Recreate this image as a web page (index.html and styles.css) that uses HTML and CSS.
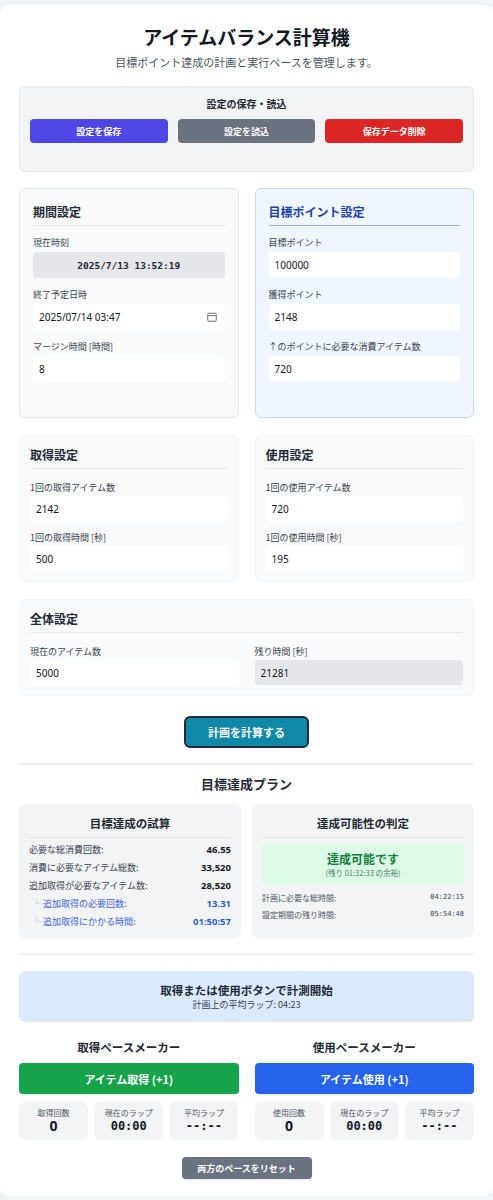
FILE: index.html
```html
<!DOCTYPE html>
<html lang="ja">
<head>
<meta charset="utf-8">
<title>アイテムバランス計算機</title>
<link rel="stylesheet" href="styles.css">
</head>
<body>
<main class="app">
  <header class="header">
    <h1 class="title">アイテムバランス計算機</h1>
    <p class="subtitle">目標ポイント達成の計画と実行ペースを管理します。</p>
  </header>

  <section class="save-box">
    <h3 class="save-title">設定の保存・読込</h3>
    <div class="save-btns">
      <button class="btn btn-indigo">設定を保存</button>
      <button class="btn btn-gray">設定を読込</button>
      <button class="btn btn-red">保存データ削除</button>
    </div>
  </section>

  <div class="grid2 row1">
    <section class="card">
      <h2 class="card-title">期間設定</h2>
      <div class="field">
        <label class="label">現在時刻</label>
        <div class="clock">2025/7/13 13:52:19</div>
      </div>
      <div class="field">
        <label class="label">終了予定日時</label>
        <div class="input date-input"><span>2025/07/14 03:47</span>
          <svg class="cal" width="10" height="10" viewBox="0 0 10 10"><rect x="0.75" y="1.25" width="8.5" height="8" rx="1" fill="none" stroke="#6b7280" stroke-width="1"/><line x1="0.75" y1="3.6" x2="9.25" y2="3.6" stroke="#6b7280" stroke-width="1"/></svg>
        </div>
      </div>
      <div class="field">
        <label class="label">マージン時間 [時間]</label>
        <input class="input" type="text" value="8">
      </div>
    </section>

    <section class="card card-blue">
      <h2 class="card-title">目標ポイント設定</h2>
      <div class="field">
        <label class="label">目標ポイント</label>
        <input class="input" type="text" value="100000">
      </div>
      <div class="field">
        <label class="label">獲得ポイント</label>
        <input class="input" type="text" value="2148">
      </div>
      <div class="field">
        <label class="label">↑のポイントに必要な消費アイテム数</label>
        <input class="input" type="text" value="720">
      </div>
    </section>
  </div>

  <div class="grid2 row2">
    <section class="card compact">
      <h2 class="card-title">取得設定</h2>
      <div class="field">
        <label class="label">1回の取得アイテム数</label>
        <input class="input" type="text" value="2142">
      </div>
      <div class="field">
        <label class="label">1回の取得時間 [秒]</label>
        <input class="input" type="text" value="500">
      </div>
    </section>
    <section class="card compact">
      <h2 class="card-title">使用設定</h2>
      <div class="field">
        <label class="label">1回の使用アイテム数</label>
        <input class="input" type="text" value="720">
      </div>
      <div class="field">
        <label class="label">1回の使用時間 [秒]</label>
        <input class="input" type="text" value="195">
      </div>
    </section>
  </div>

  <section class="card compact row3">
    <h2 class="card-title">全体設定</h2>
    <div class="grid2 inner">
      <div class="field">
        <label class="label">現在のアイテム数</label>
        <input class="input" type="text" value="5000">
      </div>
      <div class="field">
        <label class="label">残り時間 [秒]</label>
        <input class="input readonly" type="text" value="21281" readonly>
      </div>
    </div>
  </section>

  <div class="center">
    <button class="btn-calc">計画を計算する</button>
  </div>

  <hr class="divider first">

  <h2 class="plan-title">目標達成プラン</h2>
  <div class="plan-grid">
    <section class="plan-card">
      <h3 class="plan-card-title">目標達成の試算</h3>
      <div class="rows">
        <div class="row"><span>必要な総消費回数:</span><b>46.55</b></div>
        <div class="row"><span>消費に必要なアイテム総数:</span><b>33,520</b></div>
        <div class="row"><span>追加取得が必要なアイテム数:</span><b>28,520</b></div>
        <div class="row sub"><span><i class="tree">└</i> 追加取得の必要回数:</span><b>13.31</b></div>
        <div class="row sub"><span><i class="tree">└</i> 追加取得にかかる時間:</span><b>01:50:57</b></div>
      </div>
    </section>
    <section class="plan-card">
      <h3 class="plan-card-title">達成可能性の判定</h3>
      <div class="verdict">
        <div class="verdict-main">達成可能です</div>
        <div class="verdict-sub">(残り 01:32:33 の余裕)</div>
      </div>
      <div class="rows small">
        <div class="row"><span>計画に必要な総時間:</span><code>04:22:15</code></div>
        <div class="row"><span>設定期間の残り時間:</span><code>05:54:48</code></div>
      </div>
    </section>
  </div>

  <hr class="divider second">

  <section class="info">
    <div class="info-title">取得または使用ボタンで計測開始</div>
    <div class="info-sub">計画上の平均ラップ: 04:23</div>
  </section>

  <div class="grid2 pace">
    <section class="pacer">
      <h3 class="pacer-title">取得ペースメーカー</h3>
      <button class="btn-big btn-green">アイテム取得 (+1)</button>
      <div class="stats">
        <div class="stat"><div class="stat-label">取得回数</div><div class="stat-value">0</div></div>
        <div class="stat"><div class="stat-label">現在のラップ</div><div class="stat-value mono">00:00</div></div>
        <div class="stat"><div class="stat-label">平均ラップ</div><div class="stat-value mono">--:--</div></div>
      </div>
    </section>
    <section class="pacer">
      <h3 class="pacer-title">使用ペースメーカー</h3>
      <button class="btn-big btn-blue">アイテム使用 (+1)</button>
      <div class="stats">
        <div class="stat"><div class="stat-label">使用回数</div><div class="stat-value">0</div></div>
        <div class="stat"><div class="stat-label">現在のラップ</div><div class="stat-value mono">00:00</div></div>
        <div class="stat"><div class="stat-label">平均ラップ</div><div class="stat-value mono">--:--</div></div>
      </div>
    </section>
  </div>

  <div class="center">
    <button class="btn-reset">両方のペースをリセット</button>
  </div>
</main>
</body>
</html>
```

FILE: styles.css
```css
* { box-sizing: border-box; }

body {
  margin: 0;
  background: #f3f4f6;
  font-family: "Noto Sans CJK JP", "Noto Sans", sans-serif;
  color: #1f2937;
}

.app {
  margin-top: 5px;
  background: #ffffff;
  border-radius: 8px;
  padding: 18px 19px 17px;
  box-shadow: 0 1px 3px rgba(0, 0, 0, 0.06);
}

.header { text-align: center; }

.title {
  margin: 0;
  font-size: 19px;
  line-height: 28px;
  font-weight: 700;
  color: #111827;
}

.subtitle {
  margin: 3px 0 0;
  font-size: 11px;
  line-height: 16px;
  color: #4b5563;
}

.save-box {
  margin-top: 16px;
  background: #f3f4f6;
  border: 1px solid #e5e7eb;
  border-radius: 6px;
  padding: 9px 10px 28px;
}

.save-title {
  margin: 0;
  text-align: center;
  font-size: 10px;
  line-height: 15px;
  font-weight: 700;
  color: #1f2937;
}

.save-btns {
  margin-top: 8px;
  display: grid;
  grid-template-columns: 1fr 1fr 1fr;
  gap: 10px;
}

.btn {
  height: 24px;
  border: none;
  border-radius: 4px;
  font-family: inherit;
  font-size: 9px;
  font-weight: 700;
  color: #ffffff;
  padding: 0;
}

.btn-indigo { background: #4f46e5; }
.btn-gray { background: #6b7280; }
.btn-red { background: #dc2626; }

.grid2 {
  display: grid;
  grid-template-columns: 1fr 1fr;
  gap: 16px;
}

.row1 { margin-top: 16px; }
.row2 { margin-top: 17px; }
.row3 { margin-top: 17px; }

.card {
  background: #f9fafb;
  border: 1px solid #e5e7eb;
  border-radius: 6px;
  padding: 15px 13px 35px;
}

.card-title {
  margin: 0;
  font-size: 12px;
  line-height: 16px;
  font-weight: 700;
  color: #1f2937;
  padding-bottom: 5px;
  border-bottom: 1px solid #e5e7eb;
}

.card-blue {
  background: #eff6ff;
  border-color: #bfdbfe;
}

.card-blue .card-title {
  color: #1e40af;
  border-bottom-color: #93b4e0;
}

.field { margin-top: 10px; }

.label {
  display: block;
  font-size: 9px;
  line-height: 13px;
  color: #374151;
  margin-bottom: 3px;
}

.input {
  display: block;
  width: 100%;
  height: 26px;
  border: none;
  border-radius: 3px;
  background: #ffffff;
  padding: 0 6px;
  font-family: "Noto Sans", "Noto Sans CJK JP", sans-serif;
  font-size: 10px;
  color: #111827;
  outline: none;
}

.date-input {
  display: flex;
  align-items: center;
  justify-content: space-between;
  padding-right: 8px;
}

.cal { display: block; }

.clock {
  height: 26px;
  border-radius: 3px;
  background: #e5e7eb;
  display: flex;
  align-items: center;
  justify-content: center;
  font-family: "DejaVu Sans Mono", monospace;
  font-size: 9.5px;
  font-weight: 700;
  color: #1f2937;
}

.compact {
  border-color: #f3f4f6;
  padding: 11px 10px 10px;
}

.compact .field:first-of-type { margin-top: 12px; }
.compact .label { margin-bottom: 2px; }
.compact .input { height: 25px; }

.inner { gap: 16px; }
.inner .field { margin-top: 12px; }

.readonly { background: #e5e7eb; }

.center {
  display: flex;
  justify-content: center;
}

.btn-calc {
  margin-top: 20px;
  width: 125px;
  height: 32px;
  background: #0f89a7;
  border: 2px solid #1f2937;
  border-radius: 6px;
  color: #ffffff;
  font-family: inherit;
  font-size: 11px;
  font-weight: 700;
}

.divider {
  margin: 0;
  border: none;
  border-top: 2px solid #eef0f2;
}

.divider.first { margin-top: 15px; }
.divider.second { margin-top: 15px; }

.plan-title {
  margin: 10px 0 0;
  text-align: center;
  font-size: 13px;
  line-height: 18px;
  font-weight: 700;
  color: #1f2937;
}

.plan-grid {
  margin-top: 11px;
  display: grid;
  grid-template-columns: 1fr 1fr;
  gap: 11px;
}

.plan-card {
  background: #f3f4f6;
  border-radius: 6px;
  padding: 11px 10px 7px;
}

.plan-card-title {
  margin: 0;
  text-align: center;
  font-size: 11.5px;
  line-height: 16px;
  font-weight: 700;
  color: #1f2937;
  padding-bottom: 6px;
  border-bottom: 1px solid #e0e3e7;
}

.rows { margin-top: 3px; }

.row {
  display: flex;
  justify-content: space-between;
  align-items: center;
  font-size: 9px;
  line-height: 18px;
  color: #374151;
}

.row b {
  font-family: "Noto Sans", sans-serif;
  font-size: 9.5px;
  font-weight: 700;
  color: #111827;
}

.row.sub span { color: #3b63d6; padding-left: 3px; }
.row.sub b { color: #2b5bd4; }
.tree { font-style: normal; color: #9ca3af; }

.verdict {
  margin-top: 6px;
  background: #dcfce7;
  border-radius: 4px;
  padding: 7px 0 5px;
  text-align: center;
}

.verdict-main {
  font-size: 12px;
  line-height: 16px;
  font-weight: 700;
  color: #15803d;
}

.verdict-sub {
  font-size: 7.5px;
  line-height: 12px;
  color: #4d7c5f;
}

.rows.small { margin-top: 5px; }

.rows.small .row {
  font-size: 8px;
  line-height: 17px;
  color: #4b5563;
}

.rows.small code {
  font-family: "DejaVu Sans Mono", monospace;
  font-size: 7px;
  color: #374151;
}

.info {
  margin-top: 16px;
  background: #dbeafe;
  border-radius: 6px;
  padding: 11px 0 10px;
  text-align: center;
}

.info-title {
  font-size: 11.5px;
  line-height: 16px;
  font-weight: 700;
  color: #1f2937;
}

.info-sub {
  font-size: 9px;
  line-height: 14px;
  color: #374151;
}

.pace { margin-top: 17px; }

.pacer-title {
  margin: 0;
  text-align: center;
  font-size: 11.5px;
  line-height: 16px;
  font-weight: 700;
  color: #1f2937;
}

.btn-big {
  display: block;
  width: 100%;
  margin-top: 8px;
  height: 31px;
  border: none;
  border-radius: 4px;
  color: #ffffff;
  font-family: inherit;
  font-size: 11px;
  font-weight: 700;
  box-shadow: 0 1px 2px rgba(0, 0, 0, 0.1);
}

.btn-green { background: #16a34a; }
.btn-blue { background: #2563eb; }

.stats {
  margin-top: 8px;
  display: grid;
  grid-template-columns: 1fr 1fr 1fr;
  gap: 6px;
}

.stat {
  background: #f3f4f6;
  border-radius: 6px;
  padding: 5px 0 6px;
  text-align: center;
}

.stat-label {
  font-size: 8px;
  line-height: 11px;
  color: #4b5563;
}

.stat-value {
  font-family: "Noto Sans", sans-serif;
  font-size: 14px;
  line-height: 16px;
  font-weight: 700;
  color: #111827;
}

.stat-value.mono {
  font-family: "DejaVu Sans Mono", monospace;
  font-size: 12px;
}

.btn-reset {
  margin-top: 17px;
  width: 130px;
  height: 22px;
  border: none;
  border-radius: 4px;
  background: #6b7280;
  color: #ffffff;
  font-family: inherit;
  font-size: 9px;
  font-weight: 700;
  box-shadow: 0 1px 2px rgba(0, 0, 0, 0.1);
}
```
